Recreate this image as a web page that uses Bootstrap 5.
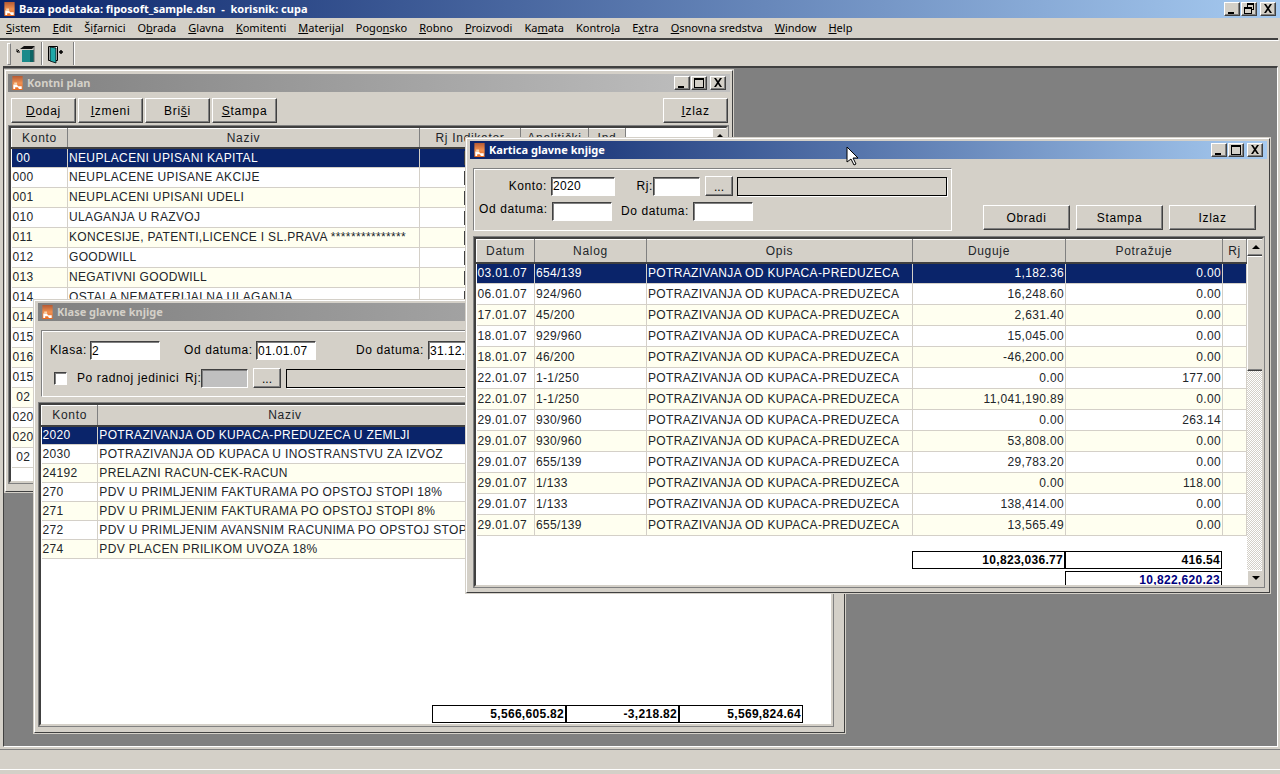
<!DOCTYPE html>
<html lang="sr">
<head>
<meta charset="utf-8">
<title>Baza podataka</title>
<link href="https://cdn.jsdelivr.net/npm/bootstrap@5.3.0/dist/css/bootstrap.min.css" rel="stylesheet">
<style>
html,body{height:774px;overflow:hidden}
body{background:#d4d0c8;color:#000;font:12px/1.2 "Liberation Sans",Arial,sans-serif}
.app{height:774px}
.tbar{height:18px;background:linear-gradient(90deg,#0a246a,#a6caf0);color:#fff;font:bold 11px/18px "Noto Sans",sans-serif;padding-left:4px;gap:4px}
.tbar.off{background:linear-gradient(90deg,#808080,#c0c0c0);color:#d4d0c8}
.ctl{gap:1px}
.ctl .x{margin-left:2px}
.ctl span{display:block;width:16px;height:14px;background:#d4d0c8;border:1px solid;border-color:#fff #404040 #404040 #fff;box-shadow:inset -1px -1px #808080}
.ctl svg{display:block}
.menu{height:20px;font:11px/20px "Noto Sans",sans-serif;padding-left:6px;gap:12px;border-bottom:0}
.rule{height:3px;background:#404040;border-bottom:1px solid #fff;border-right:2px solid #d4d0c8}
.tool{height:25px;padding-left:7px}
.grip{width:4px;height:22px;border:1px solid;border-color:#fff #808080 #808080 #fff}
.sep{width:2px;height:23px;border-left:1px solid #808080;border-right:1px solid #fff}
.desk{flex:1 1 auto;position:relative;margin:0 2px 0 3px;background:#808080;border-top:2px solid #404040;border-left:1px solid #404040;border-right:1px solid #fff;border-bottom:1px solid #fff;min-height:0}
.status{height:21px;margin:2px 0 4px;border-top:1px solid #808080;border-bottom:1px solid #fff}
.win{position:absolute;background:#d4d0c8;border:1px solid;border-color:#fff #404040 #404040 #fff;padding:2px 2px 2px 3px;outline:1px solid #d4d0c8}
.kontni{left:1px;top:2px;width:728px;height:422px;padding:3px 2px 2px 2px}
.klase{left:30px;top:232px;width:811px;height:433px}
.kartica{left:462px;top:70px;width:804px;height:455px}
.btn.w95{--bs-btn-padding-x:0;--bs-btn-padding-y:0;--bs-btn-border-radius:0;--bs-btn-font-size:12px;font-family:"Liberation Sans",Arial,sans-serif;background:#d4d0c8;color:#000;border:1px solid;border-color:#fff #404040 #404040 #fff;box-shadow:inset -1px -1px #808080;letter-spacing:.7px;height:25px;line-height:22px}
.bw1{width:65px}
.bw2{width:87px}
.btns{margin:6px 0 0 3px;gap:2px}
.ml-izlaz{margin-left:auto;margin-right:2px}
.grid{background:#fff;border:2px solid;border-color:#404040 #d4d0c8 #d4d0c8 #404040;outline:1px solid #808080;overflow:hidden;position:relative}
.grid-k{margin:3px 0 0 1px;width:719px;height:357px}
.grid-a{margin:6px 0 0 1px;width:794px;height:323px}
.grid-c{margin:6px 0 0 4px;width:790px;height:350px}
table.dg{table-layout:fixed;margin:0;width:auto;border-collapse:collapse;--bs-table-bg:transparent}
table.dg th,table.dg td{padding:0 1px;overflow:hidden;white-space:nowrap;font-weight:400;border:0;border-right:1px solid #d4d0c8;border-bottom:1px solid #d4d0c8;letter-spacing:.35px;box-shadow:none;vertical-align:middle}
table.dg th{background:#d4d0c8;text-align:center;border-top:1px solid #fff;border-left:1px solid #fff;border-right:1px solid #808080;border-bottom:2px solid #404040;letter-spacing:.7px}
table.dg td.n{text-align:right}
table.dg tr.c td{background:#fffff0}
table.dg tr.s td{background:#0a246a;color:#fff}
.h-k tr{height:20px}.h-k tr.hd{height:19px}
.h-a tr{height:19px}.h-a tr.hd{height:20px}
.h-c tr{height:21px}.h-c tr.hd{height:23px}
.chk{display:inline-block;width:4px;height:14px;margin-left:43px;background:#fff;border:1px solid #404040;border-right:0;vertical-align:middle}
.kwhite{position:absolute;left:616px;top:0;width:84px;height:18px;background:#fff}
.sb{position:absolute;background:repeating-conic-gradient(#d4d0c8 0 25%,#fff 0 50%) 0 0/2px 2px}
.sb-k{left:701px;top:0;width:16px;height:355px}
.sb-c{left:771px;top:0;width:17px;height:348px}
.sb b{display:block;background:#d4d0c8;border:1px solid;border-color:#fff #404040 #404040 #fff;box-shadow:inset -1px -1px #808080}
.sb .ar{height:17px;position:relative}
.sb .ar svg{display:block;margin:5px auto 0}
.sb .th{height:115px}
.sb .ar.dn{position:absolute;bottom:0;left:0;right:0}
.group{border:1px solid;border-color:#808080 #fff #fff #808080;outline:1px solid #d4d0c8;box-shadow:inset 1px 1px #fff,1px 1px #808080}
.g-c{margin-left:3px;width:479px;height:63px;padding:7px 0 0 0}
.g-a{margin:9px 0 0 3px;width:797px;height:67px;padding:10px 0 0 0;overflow:hidden}
.lbl{letter-spacing:.6px;white-space:nowrap}
.form-control.f95{--bs-border-radius:0;display:block;flex:none;min-height:0;height:19px;padding:0 1px;border:1px solid;border-color:#404040 #fff #fff #404040;box-shadow:inset 1px 1px #808080;border-radius:0;font:12px "Liberation Sans",Arial,sans-serif;letter-spacing:.35px;color:#000;background:#fff}
.form-control.dis{background:#c0c0c0}
.blk{height:19px;border:1px solid #000;box-shadow:1px 1px #fff;flex:none}
.dots{width:28px;height:20px!important;line-height:20px!important;flex:none;letter-spacing:0!important}
.form-check-input.c95{margin:0;width:13px;height:13px;border-radius:0;border:1px solid;border-color:#404040 #fff #fff #404040;box-shadow:inset 1px 1px #808080;flex:none;float:none}
.tot{height:18px;line-height:17px;border:1px solid #000;background:#fff;font-weight:700;text-align:right;padding-right:1px;letter-spacing:.3px;flex:none}
.navy{color:#000080}
.cursor{position:absolute;left:846px;top:146px;z-index:9}
.w53{width:153px}.w157{width:157px}.w134{width:134px}.w113{width:113px}.w124{width:124px}
.f1{width:64px}.f2{width:47px}.f3{width:60px}.f4{width:70px}
.totals-a{position:absolute;left:391px;top:300px}
.t1{margin:15px 0 0 436px}.t2{margin:2px 0 0 589px}
.vrow{gap:0}
.gc1{margin-left:28px}.gc2{margin-left:5px}.gc3{margin-left:22px}.gc4{margin-left:4px}.gc5{margin-left:5px}
</style>
</head>
<body>
<svg width="0" height="0" class="position-absolute">
<defs>
<linearGradient id="ig" x1="0" y1="0" x2="0" y2="1"><stop offset="0" stop-color="#b45a34"/><stop offset=".5" stop-color="#f09050"/><stop offset="1" stop-color="#e86a20"/></linearGradient>
<symbol id="wi" viewBox="0 0 11 15"><rect width="11" height="15" fill="url(#ig)"/><path d="M1 9h4l1 2h4v3H7l-1-2H3v2H1z" fill="#fff"/><path d="M2 7h3v2H2z" fill="#f6d8b0"/></symbol>
<symbol id="min" viewBox="0 0 14 12"><path d="M3 9h6v2H3z"/></symbol>
<symbol id="max" viewBox="0 0 14 12"><path d="M2 1h10v10H2zM3 3v7h8V3z" fill-rule="evenodd"/></symbol>
<symbol id="rest" viewBox="0 0 14 12"><path d="M5 0h7v7h-2v4H2V4h3zM6 2v2h4v2h1V2zM3 6v4h6V6z" fill-rule="evenodd"/></symbol>
<symbol id="cls" viewBox="0 0 14 12"><path d="M3 1h2l2 3 2-3h2L8 5.500l3 4.500H9L7 7l-2 3H3l3-4.500z"/></symbol>
</defs>
</svg>

<div class="app d-flex flex-column">
  <div class="tbar d-flex align-items-center">
    <svg width="11" height="14"><use href="#wi"/></svg>
    <span class="flex-grow-1">Baza podataka: fiposoft_sample.dsn&nbsp; -&nbsp; korisnik: cupa</span>
    <div class="ctl d-flex me-1"><span><svg width="14" height="12"><use href="#min"/></svg></span><span><svg width="14" height="12"><use href="#rest"/></svg></span><span class="x"><svg width="14" height="12"><use href="#cls"/></svg></span></div>
  </div>
  <nav class="menu d-flex">
    <span><u>S</u>istem</span><span><u>E</u>dit</span><span>Ši<u>f</u>arnici</span><span>O<u>b</u>rada</span><span><u>G</u>lavna</span><span><u>K</u>omitenti</span><span><u>M</u>aterijal</span><span>Pogo<u>n</u>sko</span><span><u>R</u>obno</span><span><u>P</u>roizvodi</span><span>Ka<u>m</u>ata</span><span>Kontro<u>l</u>a</span><span>E<u>x</u>tra</span><span><u>O</u>snovna sredstva</span><span><u>W</u>indow</span><span><u>H</u>elp</span>
  </nav>
  <div class="rule"></div>
  <div class="tool d-flex align-items-center">
    <div class="grip"></div>
    <svg class="ms-1" width="22" height="20" viewBox="0 0 22 20"><path d="M4 6l-2 2M2 5v3h3" fill="none" stroke="#000"/><path d="M7 6h12v12H7z" fill="#1a8a8a"/><path d="M15 6h4v12h-4z" fill="#0d6464"/><path d="M5 5l4-3h11l-3 3z" fill="#111"/><path d="M19 3v15" stroke="#666"/></svg>
    <div class="sep ms-1"></div>
    <svg class="ms-1" width="18" height="20" viewBox="0 0 18 20"><path d="M1.500 2.500h9v14h-9z" fill="#fff" stroke="#000"/><path d="M3 3l6 1v15l-6-2z" fill="#20a8a8" stroke="#000" stroke-width=".8"/><path d="M12 8h4M14 6v4" stroke="#000" stroke-width="1.500"/></svg>
    <div class="sep ms-2"></div>
  </div>

  <div class="desk">

    <div class="win kontni">
      <div class="tbar off d-flex align-items-center">
        <svg width="11" height="14"><use href="#wi"/></svg>
        <span class="flex-grow-1">Kontni plan</span>
        <div class="ctl d-flex me-1"><span><svg width="14" height="12"><use href="#min"/></svg></span><span><svg width="14" height="12"><use href="#max"/></svg></span><span class="x"><svg width="14" height="12"><use href="#cls"/></svg></span></div>
      </div>
      <div class="btns d-flex">
        <button class="btn w95 bw1"><u>D</u>odaj</button><button class="btn w95 bw1"><u>I</u>zmeni</button><button class="btn w95 bw1">Bri<u>š</u>i</button><button class="btn w95 bw1"><u>S</u>tampa</button>
        <button class="btn w95 bw1 ml-izlaz"><u>I</u>zlaz</button>
      </div>
      <div class="grid grid-k">
        <table class="table dg h-k">
          <colgroup><col style="width:56px"><col style="width:352px"><col style="width:101px"><col style="width:68px"><col style="width:37px"></colgroup>
          <tr class="hd"><th>Konto</th><th>Naziv</th><th>Rj Indikator</th><th>Analitički</th><th>Ind</th></tr>
          <tr class="s"><td>&nbsp;00</td><td>NEUPLACENI UPISANI KAPITAL</td><td><i class="chk"></i></td><td></td><td></td></tr>
          <tr><td>000</td><td>NEUPLACENE UPISANE AKCIJE</td><td><i class="chk"></i></td><td></td><td></td></tr>
          <tr class="c"><td>001</td><td>NEUPLACENI UPISANI UDELI</td><td><i class="chk"></i></td><td></td><td></td></tr>
          <tr><td>010</td><td>ULAGANJA U RAZVOJ</td><td><i class="chk"></i></td><td></td><td></td></tr>
          <tr class="c"><td>011</td><td>KONCESIJE, PATENTI,LICENCE I SL.PRAVA ***************</td><td><i class="chk"></i></td><td></td><td></td></tr>
          <tr><td>012</td><td>GOODWILL</td><td><i class="chk"></i></td><td></td><td></td></tr>
          <tr class="c"><td>013</td><td>NEGATIVNI GOODWILL</td><td><i class="chk"></i></td><td></td><td></td></tr>
          <tr><td>014</td><td>OSTALA NEMATERIJALNA ULAGANJA</td><td><i class="chk"></i></td><td></td><td></td></tr>
          <tr class="c"><td>014</td><td></td><td></td><td></td><td></td></tr>
          <tr><td>015</td><td></td><td></td><td></td><td></td></tr>
          <tr class="c"><td>016</td><td></td><td></td><td></td><td></td></tr>
          <tr><td>015</td><td></td><td></td><td></td><td></td></tr>
          <tr class="c"><td>&nbsp;02</td><td></td><td></td><td></td><td></td></tr>
          <tr><td>020</td><td></td><td></td><td></td><td></td></tr>
          <tr class="c"><td>020</td><td></td><td></td><td></td><td></td></tr>
          <tr><td>&nbsp;02</td><td></td><td></td><td></td><td></td></tr>
        </table>
        <div class="sb sb-k"><b class="ar"><svg width="8" height="4"><path d="M4 0l4 4H0z"/></svg></b></div>
      </div>
    </div>

    <div class="win klase">
      <div class="tbar off d-flex align-items-center">
        <svg width="11" height="14"><use href="#wi"/></svg>
        <span class="flex-grow-1">Klase glavne knjige</span>
      </div>
      <div class="group g-a">
        <div class="d-flex align-items-center">
          <span class="lbl ms-1 ps-1" style="width:44px">Klasa:</span>
          <input class="form-control f95 f4" value="2">
          <span class="lbl gc3 ms-4" style="width:72px">Od datuma:</span>
          <input class="form-control f95 f3" value="01.01.07">
          <span class="lbl" style="margin-left:40px;width:72px">Do datuma:</span>
          <input class="form-control f95 f3" value="31.12.07">
        </div>
        <div class="d-flex align-items-center mt-2">
          <input class="form-check-input c95" type="checkbox" style="margin-left:12px">
          <span class="lbl ms-1 ps-1" style="width:112px;margin-left:6px!important">Po radnoj jedinici</span>
          <span class="lbl" style="width:16px">Rj:</span>
          <input class="form-control f95 f2 dis">
          <button class="btn w95 dots gc2">...</button>
          <div class="blk flex-grow-1 gc2"></div>
        </div>
      </div>
      <div class="grid grid-a">
        <table class="table dg h-a">
          <colgroup><col style="width:57px"><col style="width:335px"><col style="width:134px"><col style="width:113px"><col style="width:124px"></colgroup>
          <tr class="hd"><th>Konto</th><th>Naziv</th><th></th><th></th><th></th></tr>
          <tr class="s"><td>2020</td><td>POTRAZIVANJA OD KUPACA-PREDUZECA U ZEMLJI</td><td></td><td></td><td></td></tr>
          <tr><td>2030</td><td>POTRAZIVANJA OD KUPACA U INOSTRANSTVU ZA IZVOZ</td><td></td><td></td><td></td></tr>
          <tr class="c"><td>24192</td><td>PRELAZNI RACUN-CEK-RACUN</td><td></td><td></td><td></td></tr>
          <tr><td>270</td><td>PDV U PRIMLJENIM FAKTURAMA PO OPSTOJ STOPI 18%</td><td></td><td></td><td></td></tr>
          <tr class="c"><td>271</td><td>PDV U PRIMLJENIM FAKTURAMA PO OPSTOJ STOPI 8%</td><td></td><td></td><td></td></tr>
          <tr><td>272</td><td>PDV U PRIMLJENIM AVANSNIM RACUNIMA PO OPSTOJ STOPI</td><td></td><td></td><td></td></tr>
          <tr class="c"><td>274</td><td>PDV PLACEN PRILIKOM UVOZA 18%</td><td></td><td></td><td></td></tr>
        </table>
        <div class="totals-a d-flex">
          <div class="tot w134">5,566,605.82</div><div class="tot w113">-3,218.82</div><div class="tot w124">5,569,824.64</div>
        </div>
      </div>
    </div>

    <div class="win kartica">
      <div class="tbar d-flex align-items-center">
        <svg width="11" height="14"><use href="#wi"/></svg>
        <span class="flex-grow-1">Kartica glavne knjige</span>
        <div class="ctl d-flex me-1"><span><svg width="14" height="12"><use href="#min"/></svg></span><span><svg width="14" height="12"><use href="#max"/></svg></span><span class="x"><svg width="14" height="12"><use href="#cls"/></svg></span></div>
      </div>
      <div class="d-flex align-items-end" style="margin-top:9px">
        <div class="group g-c">
          <div class="d-flex align-items-center">
            <span class="lbl text-end" style="width:73px">Konto:</span>
            <input class="form-control f95 f1 ms-1" value="2020">
            <span class="lbl text-end" style="width:38px">Rj:</span>
            <input class="form-control f95 f2" value="">
            <button class="btn w95 dots gc2">...</button>
            <div class="blk gc4" style="width:210px"></div>
          </div>
          <div class="d-flex align-items-start mt-1 pt-1" style="padding-top:6px!important;margin-top:0!important">
            <span class="lbl ms-1" style="width:73px;margin-left:5px!important">Od datuma:</span>
            <input class="form-control f95 f3">
            <span class="lbl" style="margin:2px 0 0 9px;width:72px">Do datuma:</span>
            <input class="form-control f95 f3 mt-0" style="margin-top:2px">
          </div>
        </div>
        <div class="d-flex gap-1 mb-0" style="margin-left:31px;gap:6px!important;margin-bottom:1px!important">
          <button class="btn w95 bw2">Obradi</button><button class="btn w95 bw2">Stampa</button><button class="btn w95 bw2">Izlaz</button>
        </div>
      </div>
      <div class="grid grid-c">
        <table class="table dg h-c">
          <colgroup><col style="width:58px"><col style="width:112px"><col style="width:266px"><col style="width:153px"><col style="width:157px"><col style="width:24px"></colgroup>
          <tr class="hd"><th>Datum</th><th>Nalog</th><th>Opis</th><th>Duguje</th><th>Potražuje</th><th>Rj</th></tr>
          <tr class="s"><td>03.01.07</td><td>654/139</td><td>POTRAZIVANJA OD KUPACA-PREDUZECA</td><td class="n">1,182.36</td><td class="n">0.00</td><td></td></tr>
          <tr><td>06.01.07</td><td>924/960</td><td>POTRAZIVANJA OD KUPACA-PREDUZECA</td><td class="n">16,248.60</td><td class="n">0.00</td><td></td></tr>
          <tr class="c"><td>17.01.07</td><td>45/200</td><td>POTRAZIVANJA OD KUPACA-PREDUZECA</td><td class="n">2,631.40</td><td class="n">0.00</td><td></td></tr>
          <tr><td>18.01.07</td><td>929/960</td><td>POTRAZIVANJA OD KUPACA-PREDUZECA</td><td class="n">15,045.00</td><td class="n">0.00</td><td></td></tr>
          <tr class="c"><td>18.01.07</td><td>46/200</td><td>POTRAZIVANJA OD KUPACA-PREDUZECA</td><td class="n">-46,200.00</td><td class="n">0.00</td><td></td></tr>
          <tr><td>22.01.07</td><td>1-1/250</td><td>POTRAZIVANJA OD KUPACA-PREDUZECA</td><td class="n">0.00</td><td class="n">177.00</td><td></td></tr>
          <tr class="c"><td>22.01.07</td><td>1-1/250</td><td>POTRAZIVANJA OD KUPACA-PREDUZECA</td><td class="n">11,041,190.89</td><td class="n">0.00</td><td></td></tr>
          <tr><td>29.01.07</td><td>930/960</td><td>POTRAZIVANJA OD KUPACA-PREDUZECA</td><td class="n">0.00</td><td class="n">263.14</td><td></td></tr>
          <tr class="c"><td>29.01.07</td><td>930/960</td><td>POTRAZIVANJA OD KUPACA-PREDUZECA</td><td class="n">53,808.00</td><td class="n">0.00</td><td></td></tr>
          <tr><td>29.01.07</td><td>655/139</td><td>POTRAZIVANJA OD KUPACA-PREDUZECA</td><td class="n">29,783.20</td><td class="n">0.00</td><td></td></tr>
          <tr class="c"><td>29.01.07</td><td>1/133</td><td>POTRAZIVANJA OD KUPACA-PREDUZECA</td><td class="n">0.00</td><td class="n">118.00</td><td></td></tr>
          <tr><td>29.01.07</td><td>1/133</td><td>POTRAZIVANJA OD KUPACA-PREDUZECA</td><td class="n">138,414.00</td><td class="n">0.00</td><td></td></tr>
          <tr class="c"><td>29.01.07</td><td>655/139</td><td>POTRAZIVANJA OD KUPACA-PREDUZECA</td><td class="n">13,565.49</td><td class="n">0.00</td><td></td></tr>
        </table>
        <div class="d-flex t1"><div class="tot w53">10,823,036.77</div><div class="tot w157">416.54</div></div>
        <div class="d-flex t2"><div class="tot w157 navy">10,822,620.23</div></div>
        <div class="sb sb-c"><b class="ar"><svg width="8" height="4"><path d="M4 0l4 4H0z"/></svg></b><b class="th"></b><b class="ar dn"><svg width="8" height="4"><path d="M0 0h8L4 4z"/></svg></b></div>
      </div>
    </div>
  </div>
  <div class="status"></div>
</div>
<svg class="cursor" width="14" height="20" viewBox="0 0 14 20"><path d="M1 1v15l4-3 3 6 2-1-3-6h5z" fill="#fff" stroke="#000"/></svg>
</body>
</html>
